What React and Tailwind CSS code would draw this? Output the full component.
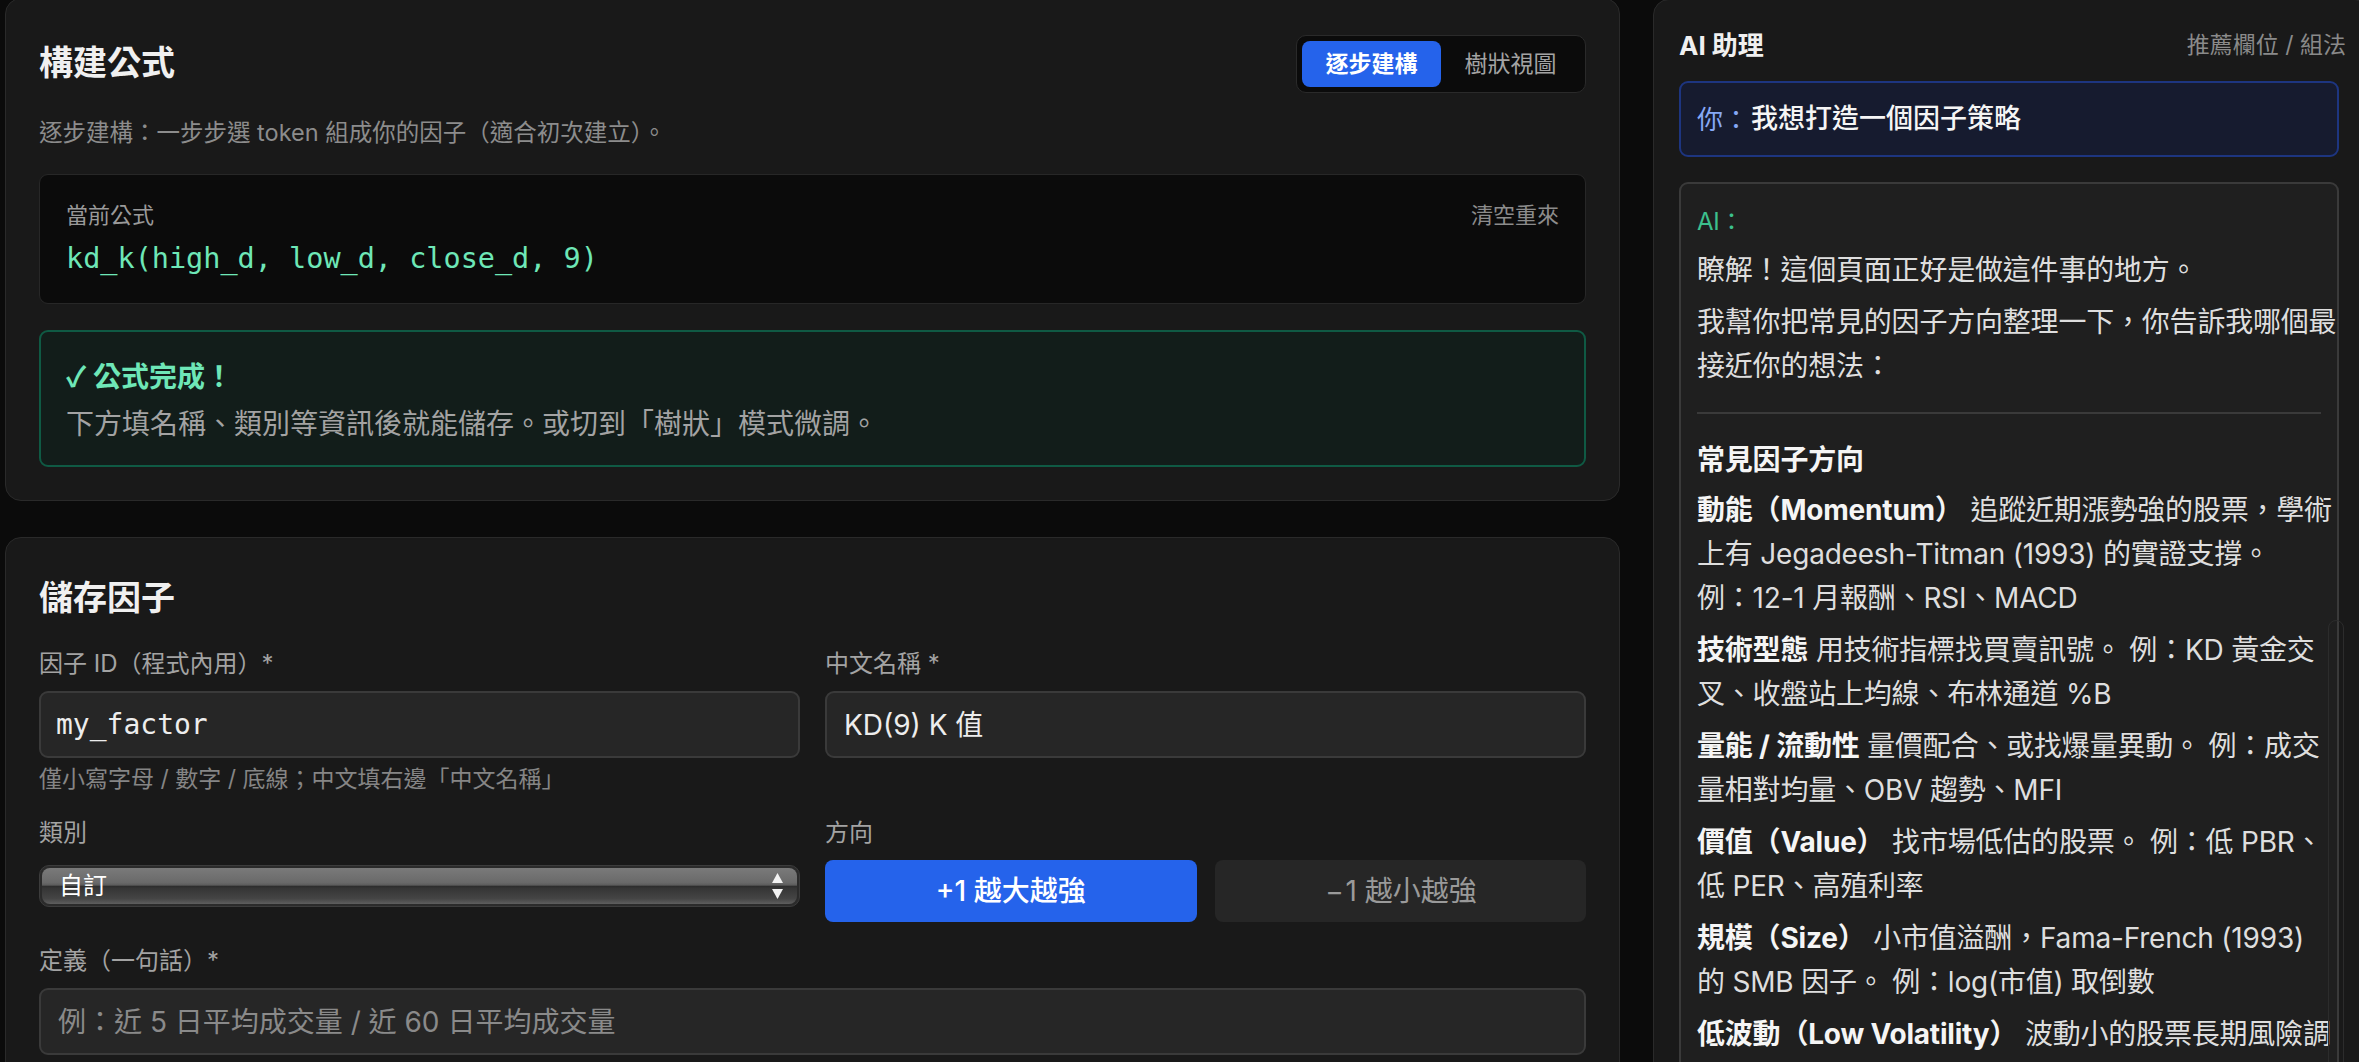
import React from "react";

const SANS = "font-['Inter','Noto_Sans_CJK_TC',sans-serif]";
const MONO = "font-['DejaVu_Sans_Mono','Noto_Sans_CJK_TC',monospace]";
const CJK = "font-['Noto_Sans_CJK_TC',sans-serif]";

const factorGroups = [
  {
    title: "動能（Momentum）",
    lines: [
      "追蹤近期漲勢強的股票，學術",
      "上有 Jegadeesh-Titman (1993) 的實證支撐。",
      "例：12-1 月報酬、RSI、MACD",
    ],
  },
  {
    title: "技術型態",
    lines: ["用技術指標找買賣訊號。 例：KD 黃金交", "叉、收盤站上均線、布林通道 %B"],
  },
  {
    title: "量能 / 流動性",
    lines: ["量價配合、或找爆量異動。 例：成交", "量相對均量、OBV 趨勢、MFI"],
  },
  {
    title: "價值（Value）",
    lines: ["找市場低估的股票。 例：低 PBR、", "低 PER、高殖利率"],
  },
  {
    title: "規模（Size）",
    lines: ["小市值溢酬，Fama-French (1993)", "的 SMB 因子。 例：log(市值) 取倒數"],
  },
  {
    title: "低波動（Low Volatility）",
    lines: ["波動小的股票長期風險調", "整後報酬較佳"],
  },
];

function FormulaCard() {
  return (
    <section className="rounded-[16px] border border-[#2a2a2a] bg-[#191919] px-[33px] pt-[36px] pb-[33px]">
      <div className="flex h-[58px] items-center justify-between">
        <h2 className="-mt-[3px] text-[34px] font-bold leading-[48px] text-[#f0f0f0]">構建公式</h2>
        <div className="flex h-[58px] w-[290px] items-center rounded-[10px] border border-[#2a2a2a] bg-[#0b0b0b] p-[5px]">
          <button className="flex h-[46px] flex-1 items-center justify-center rounded-[8px] bg-[#2563eb] text-[23px] font-semibold text-white">
            逐步建構
          </button>
          <button className="flex h-[46px] flex-1 items-center justify-center rounded-[8px] text-[23px] text-[#a3a3a3]">
            樹狀視圖
          </button>
        </div>
      </div>

      <p className="mt-[23px] text-[23.5px] leading-[34px] text-[#8c8c8c]">
        逐步建構：一步步選 token 組成你的因子（適合初次建立）。
      </p>

      <div className="mt-[24px] h-[130px] rounded-[9px] border border-[#272727] bg-[#0b0b0b] px-[26px] pt-[24px]">
        <div className="flex items-center justify-between text-[22px] leading-[33px] text-[#9a9a9a]">
          <span>當前公式</span>
          <span className="text-[#8c8c8c]">清空重來</span>
        </div>
        <div className={`${MONO} mt-[7px] text-[28.5px] leading-[40px] text-[#6ee7b7]`}>
          kd_k(high_d, low_d, close_d, 9)
        </div>
      </div>

      <div className="mt-[26px] h-[137px] rounded-[9px] border-2 border-[#0f5a44] bg-[#121d1a] px-[25px] pt-[23px]">
        <div className="text-[28px] font-bold leading-[40px] text-[#6ee7b7]">
          <span className={CJK}>✓</span> 公式完成！
        </div>
        <div className="mt-[6px] text-[28px] leading-[42px] text-[#a3a3a3]">
          下方填名稱、類別等資訊後就能儲存。或切到「樹狀」模式微調。
        </div>
      </div>
    </section>
  );
}

function Label({ children }) {
  return <div className="text-[24px] leading-[34px] text-[#a3a3a3]">{children}</div>;
}

function SaveCard() {
  return (
    <section className="rounded-[16px] border border-[#2a2a2a] bg-[#191919] px-[33px] pt-[36px] pb-[40px]">
      <h2 className="text-[34px] font-bold leading-[48px] text-[#f0f0f0]">儲存因子</h2>

      <div className="mt-[25px] grid grid-cols-2 gap-x-[25px]">
        <div>
          <Label>因子 ID（程式內用）*</Label>
          <div className="mt-[10px] flex h-[67px] items-center rounded-[9px] border-2 border-[#3a3a3a] bg-[#262626] px-[15px]">
            <span className={`${MONO} text-[28px] text-[#ededed]`}>my_factor</span>
          </div>
          <div className="mt-[5px] text-[23px] leading-[32px] text-[#858585]">
            僅小寫字母 / 數字 / 底線；中文填右邊「中文名稱」
          </div>
        </div>
        <div>
          <Label>中文名稱 *</Label>
          <div className="mt-[10px] flex h-[67px] items-center rounded-[9px] border-2 border-[#3a3a3a] bg-[#262626] px-[17px]">
            <span className="text-[28px] text-[#ededed]">KD(9) K 值</span>
          </div>
        </div>
      </div>

      <div className="mt-[21px] grid grid-cols-2 gap-x-[25px]">
        <div>
          <Label>類別</Label>
          <div className="mt-[15px] h-[42px] rounded-[10px] border border-[#3c3c3c] bg-[#2b2b2b] p-[2px]">
            <div className="flex h-full items-center justify-between rounded-[8px] bg-[linear-gradient(to_bottom,#7a7a7a_0%,#6a6a6a_40%,#5c5c5c_48%,#2c2c2c_50%,#353535_56%,#454545_85%,#5e5e5e_100%)] pl-[17px] pr-[13px]">
              <span className="text-[24px] leading-none text-white">自訂</span>
              <svg width="13" height="28" viewBox="0 0 13 28" className="text-[#f2f2f2]">
                <path d="M6.5 1 L12 11 L1 11 Z" fill="currentColor" />
                <path d="M1 17 L12 17 L6.5 27 Z" fill="currentColor" />
              </svg>
            </div>
          </div>
        </div>
        <div>
          <Label>方向</Label>
          <div className="mt-[10px] flex gap-[18px]">
            <button className="flex h-[62px] flex-1 items-center justify-center rounded-[8px] bg-[#2563eb] text-[28px] font-medium text-white">
              +1 越大越強
            </button>
            <button className="flex h-[62px] flex-1 items-center justify-center rounded-[8px] bg-[#262626] text-[28px] text-[#9a9a9a]">
              <span className="inline-block w-[22px] text-center">−</span>1 越小越強
            </button>
          </div>
        </div>
      </div>

      <div className="mt-[22px]">
        <Label>定義（一句話）*</Label>
        <div className="mt-[10px] flex h-[67px] items-center rounded-[9px] border-2 border-[#3a3a3a] bg-[#262626] px-[17px]">
          <span className="text-[28px] text-[#8a8a8a]">例：近 5 日平均成交量 / 近 60 日平均成交量</span>
        </div>
      </div>
    </section>
  );
}

function AssistantPanel() {
  return (
    <aside className="relative h-[1100px] rounded-[16px] border border-[#2a2a2a] bg-[#191919] pl-[25px] pr-[24px] pt-[26px]">
      <div className="flex h-[38px] items-center justify-between">
        <span className="text-[26px] font-bold text-[#f0f0f0]">AI 助理</span>
        <span className="text-[23px] text-[#8a8a8a]">推薦欄位 / 組法</span>
      </div>

      <div className="mr-[7px]">
        <div className="mt-[17px] flex h-[76px] items-center rounded-[9px] border-2 border-[#1d3580] bg-[#161b2f] px-[16px]">
          <span className="text-[26px] text-[#86a8f5]">你：</span>
          <span className="ml-[2px] text-[27px] font-medium text-[#f5f5f5]">我想打造一個因子策略</span>
        </div>

        <div className="mt-[25px] rounded-[9px] border-2 border-[#3a3a3a] bg-[#1f1f1f] px-[16px] pt-[21px] pb-[40px] text-[28px] tracking-[-0.2px] text-[#dedede]">
          <div className="text-[24px] leading-[34px] text-[#3cc08d]">AI：</div>
          <div className="mt-[9px] whitespace-nowrap leading-[44px]">瞭解！這個頁面正好是做這件事的地方。</div>
          <div className="mt-[8px] whitespace-nowrap leading-[44px]">
            <div>我幫你把常見的因子方向整理一下，你告訴我哪個最</div>
            <div>接近你的想法：</div>
          </div>
          <div className="mt-[24px] h-[2px] bg-[#3a3a3a]" />
          <div className="mt-[24px] font-bold leading-[44px] text-[#f5f5f5]">常見因子方向</div>
          <div className="mt-[6px] flex flex-col gap-[8px]">
            {factorGroups.map((g) => (
              <div key={g.title} className="whitespace-nowrap leading-[44px]">
                <div>
                  <span className="font-bold text-[#f5f5f5]">{g.title}</span> {g.lines[0]}
                </div>
                {g.lines.slice(1).map((l) => (
                  <div key={l}>{l}</div>
                ))}
              </div>
            ))}
          </div>
        </div>
      </div>

      {/* overlay scrollbar of the chat area */}
      <div className="absolute left-[674px] top-[620px] h-[500px] w-[16px] rounded-full border border-[#2c2c2c]" />
    </aside>
  );
}

export default function App() {
  return (
    <div className={`${SANS} flex h-[1062px] w-[2359px] gap-[33px] overflow-hidden bg-[#0b0b0b] pl-[5px]`}>
      <div className="-mt-[2px] flex w-[1615px] shrink-0 flex-col gap-[36px]">
        <FormulaCard />
        <SaveCard />
      </div>
      <div className="-mt-[1px] w-[718px] shrink-0">
        <AssistantPanel />
      </div>
    </div>
  );
}
